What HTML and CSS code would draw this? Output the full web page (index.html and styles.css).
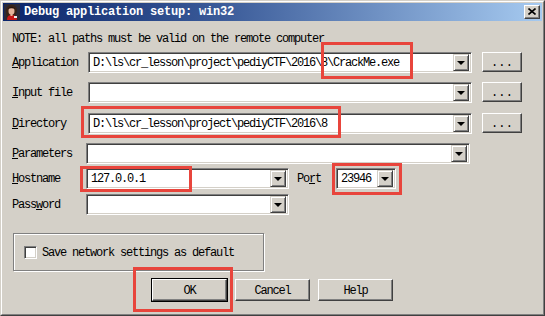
FILE: index.html
```html
<!DOCTYPE html>
<html>
<head>
<meta charset="utf-8">
<link rel="stylesheet" href="styles.css">
</head>
<body>
<div class="window">
  <div class="frame">
    <div class="titlebar">
      <svg class="appicon" width="16" height="16" viewBox="0 0 16 16">
        <rect width="16" height="16" fill="#2a2a3a"/>
        <path d="M2 9 C1 3 5 0 9 1 C13 2 14 6 12 10 L11 16 L3 16 Z" fill="#3a2418"/>
        <ellipse cx="7.5" cy="7" rx="3" ry="3.8" fill="#e6b49a"/>
        <path d="M4 5 C5 2 10 2 11 5 C9 4 6 4 4 5 Z" fill="#2a160c"/>
        <path d="M3 16 C3 12 5 11 7.5 11 C10 11 13 12 13 16 Z" fill="#c81818"/>
        <rect x="6.5" y="10" width="2" height="2" fill="#e6b49a"/>
        <rect x="10" y="12" width="3" height="2" fill="#f0f0f0"/>
      </svg>
      <span class="title">Debug application setup: win32</span>
      <div class="closebtn">
        <svg width="8" height="7" viewBox="0 0 8 7"><path d="M0.5 0.5 L7.5 6.5 M7.5 0.5 L0.5 6.5" stroke="#000" stroke-width="1.6" fill="none"/></svg>
      </div>
    </div>
    <div class="content">
      <div class="note">NOTE: all paths must be valid on the remote computer</div>

      <div class="row r1">
        <span class="lbl lw76"><u>A</u>pplication</span>
        <div class="combo cw384"><span class="val">D:\ls\cr_lesson\project\pediyCTF\2016\8\CrackMe.exe</span><span class="dd"><i class="tri"></i></span></div>
        <div class="btn browse">...</div>
      </div>

      <div class="row r2">
        <span class="lbl lw76"><u>I</u>nput file</span>
        <div class="combo cw384"><span class="val"></span><span class="dd"><i class="tri"></i></span></div>
        <div class="btn browse">...</div>
      </div>

      <div class="row r3">
        <span class="lbl lw76"><u>D</u>irectory</span>
        <div class="combo cw384"><span class="val">D:\ls\cr_lesson\project\pediyCTF\2016\8</span><span class="dd"><i class="tri"></i></span></div>
        <div class="btn browse">...</div>
      </div>

      <div class="row r4">
        <span class="lbl lw74"><u>P</u>arameters</span>
        <div class="combo cw384"><span class="val"></span><span class="dd"><i class="tri"></i></span></div>
      </div>

      <div class="row r5">
        <span class="lbl lw74"><u>H</u>ostname</span>
        <div class="combo cw203"><span class="val">127.0.0.1</span><span class="dd"><i class="tri"></i></span></div>
        <span class="lbl portlbl">Po<u>r</u>t</span>
        <div class="combo cw60"><span class="val">23946</span><span class="dd"><i class="tri"></i></span></div>
      </div>

      <div class="row r6">
        <span class="lbl lw74">Pass<u>w</u>ord</span>
        <div class="combo cw203"><span class="val"></span><span class="dd"><i class="tri"></i></span></div>
      </div>

      <div class="group">
        <span class="check"></span>
        <span class="checklbl">Save network settings as default</span>
      </div>

      <div class="buttons">
        <div class="defwrap"><div class="btn okbtn">OK</div></div>
        <div class="btn std cancel">Cancel</div>
        <div class="btn std help">Help</div>
      </div>
    </div>
  </div>

  <div class="mark m1"></div>
  <div class="mark m2"></div>
  <div class="mark m3"></div>
  <div class="mark m4"></div>
  <div class="mark m5"></div>
</div>
</body>
</html>
```

FILE: styles.css
```css
* { box-sizing: border-box; }
html, body { margin: 0; padding: 0; background: #d4d0c8; }
body {
  font-family: "Liberation Mono", "DejaVu Sans Mono", monospace;
  font-size: 12px;
  letter-spacing: -1.2px;
  color: #000;
}
.window {
  position: relative;
  width: 545px;
  height: 316px;
  background: #d4d0c8;
  border: 1px solid;
  border-color: #d4d0c8 #404040 #404040 #d4d0c8;
}
.frame {
  width: 100%;
  height: 100%;
  border: 1px solid;
  border-color: #fff #808080 #808080 #fff;
  padding: 1px;
}
.titlebar {
  height: 18px;
  background: linear-gradient(to right, #0a246a 0%, #3a5a98 40%, #a6caf0 100%);
  display: flex;
  align-items: center;
  padding-left: 1px;
  padding-right: 2px;
}
.appicon { display: block; flex: none; }
.title {
  margin-left: 4px;
  color: #fff;
  font-weight: bold;
  font-size: 12px;
  letter-spacing: -0.2px;
  flex: 1;
  white-space: nowrap;
}
.closebtn {
  width: 16px;
  height: 14px;
  background: #d4d0c8;
  border: 1px solid;
  border-color: #fff #404040 #404040 #fff;
  box-shadow: inset -1px -1px #808080;
  display: flex;
  align-items: center;
  justify-content: center;
  padding-bottom: 1px;
}
.closebtn svg { display: block; }
.content {
  padding-left: 9px;
}
.note {
  margin-top: 10px;
  height: 14px;
  line-height: 16px;
  white-space: nowrap;
}
.row {
  display: flex;
  align-items: flex-start;
  height: 21px;
}
.r1 { margin-top: 7px; }
.r2 { margin-top: 9px; }
.r3 { margin-top: 10px; }
.r4 { margin-top: 9px; }
.r5 { margin-top: 4px; }
.r6 { margin-top: 5px; }
.lbl {
  display: block;
  line-height: 23px;
  white-space: nowrap;
  flex: none;
}
.lbl u { text-decoration: underline; text-underline-offset: 1px; }
.lw76 { width: 76px; }
.lw74 { width: 74px; }
.portlbl { margin-left: 8px; width: 39px; }
.combo {
  display: flex;
  height: 21px;
  background: #fff;
  border: 1px solid;
  border-color: #808080 #fff #fff #808080;
  box-shadow: inset 1px 1px #404040, inset -1px -1px #d4d0c8;
  padding: 1px 2px 2px 1px;
  flex: none;
}
.cw384 { width: 384px; }
.cw203 { width: 203px; }
.cw60 { width: 60px; }
.val {
  flex: 1;
  padding-left: 3px;
  padding-top: 1px;
  line-height: 17px;
  white-space: nowrap;
  overflow: hidden;
}
.dd {
  width: 16px;
  height: 17px;
  flex: none;
  background: #d4d0c8;
  border: 1px solid;
  border-color: #d4d0c8 #404040 #404040 #d4d0c8;
  box-shadow: inset 1px 1px #fff, inset -1px -1px #808080;
  display: flex;
  align-items: center;
  justify-content: center;
}
.tri {
  display: block;
  width: 0;
  height: 0;
  border-left: 4px solid transparent;
  border-right: 4px solid transparent;
  border-top: 4px solid #000;
  margin-top: 1px;
}
.btn {
  background: #d4d0c8;
  border: 1px solid;
  border-color: #fff #404040 #404040 #fff;
  box-shadow: inset -1px -1px #808080;
  display: flex;
  align-items: center;
  justify-content: center;
  white-space: nowrap;
}
.browse {
  width: 40px;
  height: 20px;
  margin-left: 10px;
  letter-spacing: 0.2px;
  padding-top: 1px;
}
.group {
  margin-top: 18px;
  margin-left: 1px;
  width: 251px;
  height: 38px;
  border: 1px solid #808080;
  box-shadow: inset 1px 1px #fff, 1px 1px #fff;
  display: flex;
  align-items: center;
  padding-left: 10px;
}
.check {
  width: 13px;
  height: 13px;
  background: #fff;
  border: 1px solid;
  border-color: #808080 #fff #fff #808080;
  box-shadow: inset 1px 1px #404040, inset -1px -1px #d4d0c8;
  flex: none;
}
.checklbl { margin-left: 5px; white-space: nowrap; padding-top: 2px; }
.buttons {
  margin-top: 7px;
  margin-left: 139px;
  display: flex;
  align-items: center;
}
.buttons .btn { padding-top: 2px; }
.defwrap {
  border: 1px solid #000;
  width: 77px;
  height: 24px;
}
.okbtn { width: 75px; height: 22px; }
.std { width: 75px; height: 22px; }
.cancel { margin-left: 7px; }
.help { margin-left: 8px; }
.mark {
  position: absolute;
  border: 3px solid #e8453c;
}
.m1 { left: 320px; top: 41px; width: 92px; height: 37px; }
.m2 { left: 80px; top: 105px; width: 260px; height: 32px; }
.m3 { left: 79px; top: 165px; width: 112px; height: 26px; }
.m4 { left: 331px; top: 162px; width: 70px; height: 32px; }
.m5 { left: 132px; top: 266px; width: 100px; height: 45px; }
```
